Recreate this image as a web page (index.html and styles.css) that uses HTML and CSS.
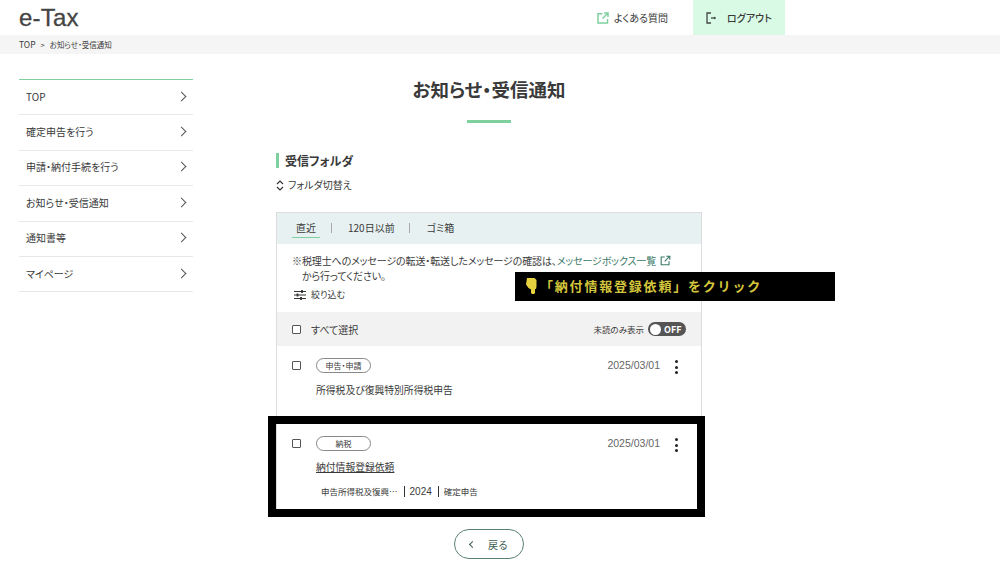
FILE: index.html
```html
<!DOCTYPE html>
<html lang="ja">
<head>
    <meta charset="UTF-8">
    <title>お知らせ・受信通知</title>
    <link rel="stylesheet" href="styles.css">
</head>
<body>
    <header class="header">
        <div class="logo">e-Tax</div>
        <a class="head-link faq">
            <svg width="12" height="12" viewBox="0 0 12 12" fill="none" stroke="#7fd0a0" stroke-width="1.5"><path d="M10.5 7v4H1V1.8h4.5"/><path d="M7 1h4v4M11 1L5.5 6.5"/></svg>
            よくある質問
        </a>
        <a class="head-link logout">
            <svg width="11" height="12" viewBox="0 0 11 12" fill="none" stroke="#444" stroke-width="1.3"><path d="M5 1H1v10h4"/><path d="M5 6h4.5"/><path d="M8 4.5L10 6 8 7.5z" fill="#444" stroke="none"/></svg>
            ログアウト
        </a>
    </header>
    <div class="breadcrumb"><span class="crumb-top">TOP</span><span>&gt;</span><span>お知らせ・受信通知</span></div>

    <div class="layout">
        <nav class="side">
            <a class="side-item">TOP<span class="chev"></span></a>
            <a class="side-item">確定申告を行う<span class="chev"></span></a>
            <a class="side-item">申請・納付手続を行う<span class="chev"></span></a>
            <a class="side-item">お知らせ・受信通知<span class="chev"></span></a>
            <a class="side-item">通知書等<span class="chev"></span></a>
            <a class="side-item">マイページ<span class="chev"></span></a>
        </nav>

        <main class="main">
            <h1 class="title">お知らせ・受信通知</h1>
            <div class="title-bar"></div>
            <h2 class="folder">受信フォルダ</h2>
            <div class="switch">
                <svg width="8" height="11" viewBox="0 0 8 11" fill="none" stroke="#333" stroke-width="1.2"><path d="M1 4l3-3 3 3M1 7l3 3 3-3"/></svg>
                フォルダ切替え
            </div>

            <div class="panel">
                <div class="tabs">
                    <span class="tab active">直近</span>
                    <span class="tab">120日以前</span>
                    <span class="tab">ゴミ箱</span>
                </div>
                <div class="notice">
                    <p>※税理士へのメッセージの転送・転送したメッセージの確認は、<span class="msg-link">メッセージボックス一覧</span>
                        <svg width="11" height="11" viewBox="0 0 14 14" fill="none" stroke="#3b7a68" stroke-width="1.4"><path d="M11.5 8v4.5h-10v-10H6"/><path d="M8 1.5h4.5V6M12.5 1.5L6 8"/></svg>
                    </p>
                    <p class="indent">から行ってください。</p>
                    <div class="filter">
                        <svg width="12" height="10" viewBox="0 0 12 10" fill="none" stroke="#333" stroke-width="1"><path d="M0 1.5h12M0 5h12M0 8.5h12"/><path d="M8 0v3M3.5 3.5v3M7 7v3" stroke-width="1.8"/></svg>
                        絞り込む
                    </div>
                </div>
                <div class="select-all">
                    <span class="check"></span>
                    <span>すべて選択</span>
                    <span class="unread">未読のみ表示</span>
                    <span class="toggle"><i></i>OFF</span>
                </div>
                <div class="msg">
                    <span class="check"></span>
                    <div class="msg-body">
                        <span class="pill">申告・申請</span>
                        <div class="msg-title">所得税及び復興特別所得税申告</div>
                    </div>
                    <span class="date">2025/03/01</span>
                    <span class="dots"><i></i><i></i><i></i></span>
                </div>
                <div class="msg second">
                    <span class="check"></span>
                    <div class="msg-body">
                        <span class="pill">納税</span>
                        <div class="msg-title link">納付情報登録依頼</div>
                        <div class="meta"><span>申告所得税及復興…</span><span class="year">2024</span><span>確定申告</span></div>
                    </div>
                    <span class="date">2025/03/01</span>
                    <span class="dots"><i></i><i></i><i></i></span>
                </div>
                <div class="frame"></div>
            </div>

            <button class="back"><span class="back-chev"></span>戻る</button>

            <div class="callout">
                <svg width="11" height="16" viewBox="0 0 11 16" fill="#e6d23e"><path d="M1 0h7.5l2 2v6.5L10 11H9v4l-1 1H6l-1-1v-3.5L2.5 10 0 6.5z"/></svg>
                <span class="callout-text">「納付情報登録依頼」をクリック</span>
            </div>
        </main>
    </div>
</body>
</html>
```

FILE: styles.css
```css
* {
    box-sizing: border-box;
}
body {
    margin: 0;
    height: 584px;
    overflow: hidden;
    background-color: white;
    color: #3a3a3a;
    font-family: "Noto Sans CJK JP", "Noto Sans", sans-serif;
    font-feature-settings: "palt";
    font-size: 10px;
}
p {
    margin: 0;
}
.header {
    display: flex;
    align-items: center;
    height: 35px;
    padding-left: 19px;
}
.logo {
    flex: 1;
    font-family: "Liberation Sans", sans-serif;
    font-size: 24px;
    letter-spacing: 0.2px;
    color: #444;
    -webkit-text-stroke: 0.3px #444;
}
.head-link {
    display: flex;
    align-items: center;
    height: 35px;
    font-size: 10px;
}
.faq {
    gap: 5px;
    margin-right: 25px;
}
.logout {
    gap: 10px;
    width: 92px;
    margin-right: 215px;
    padding-left: 13px;
    background-color: #d9fbe6;
    font-weight: 500;
}
.breadcrumb {
    display: flex;
    gap: 5px;
    height: 19px;
    padding-left: 19px;
    background-color: #f5f5f5;
    font-size: 7.5px;
    line-height: 19px;
}
.crumb-top {
    font-size: 8.5px;
}
.layout {
    display: flex;
    padding-left: 19px;
}
.side {
    width: 174px;
    margin-top: 25px;
    border-top: 1px solid #7ed09f;
    align-self: flex-start;
}
.side-item {
    display: flex;
    align-items: center;
    justify-content: space-between;
    height: 35.4px;
    padding: 0 7px 2px;
    border-bottom: 1.5px solid #e8e8e8;
    font-size: 10px;
}
.chev {
    width: 7px;
    height: 7px;
    margin-right: 1px;
    border-top: 1.3px solid #555;
    border-right: 1.3px solid #555;
    transform: rotate(45deg);
}
.main {
    position: relative;
    width: 426px;
    margin-left: 83px;
}
.title {
    margin: 21px 0 0;
    font-size: 18.5px;
    font-weight: 700;
    line-height: 28px;
    text-align: center;
}
.title-bar {
    width: 44px;
    height: 3px;
    margin: 17px auto 0;
    background-color: #7ed09f;
}
.folder {
    margin: 30px 0 0;
    padding-left: 6px;
    border-left: 3px solid #7ed09f;
    font-size: 12px;
    font-weight: 700;
    line-height: 15px;
}
.switch {
    display: flex;
    align-items: center;
    gap: 4px;
    margin-top: 10px;
    font-size: 10px;
    line-height: 14px;
}
.panel {
    position: relative;
    margin-top: 20px;
    border: 1px solid #ddd;
    border-bottom: none;
}
.tabs {
    display: flex;
    align-items: center;
    height: 31px;
    padding: 0 0 1px 15px;
    background-color: #e7f1f1;
}
.tab {
    padding: 0 14px 0 16px;
    border-left: 1px solid #aaa;
    line-height: 10px;
}
.tab.active {
    margin-right: 11px;
    padding: 4px 4px 4px;
    border-left: none;
    border-bottom: 1px solid #7ed09f;
}
.tab:last-child {
    padding-left: 17px;
}
.notice {
    height: 68px;
    padding: 9px 15px 0;
    line-height: 15px;
}
.notice p {
    white-space: nowrap;
    letter-spacing: -0.12px;
}
.notice svg {
    vertical-align: -1px;
    margin-left: 2px;
}
.msg-link {
    color: #3b7a68;
}
.indent {
    padding-left: 10px;
}
.filter {
    display: flex;
    align-items: center;
    gap: 5px;
    margin-top: 5px;
    font-size: 9px;
    line-height: 14px;
}
.select-all {
    display: flex;
    align-items: center;
    height: 34px;
    padding: 0 15px;
    background-color: #f2f2f2;
}
.select-all .check {
    margin-right: 10px;
}
.unread {
    margin-left: auto;
    margin-right: 4px;
    font-size: 8.5px;
}
.toggle {
    display: flex;
    align-items: center;
    gap: 3px;
    width: 38px;
    height: 14px;
    padding-left: 2px;
    border-radius: 7px;
    background-color: #555;
    color: white;
    font-size: 9px;
    font-weight: 700;
}
.toggle i {
    width: 11px;
    height: 11px;
    border-radius: 50%;
    background-color: white;
}
.check {
    flex: none;
    width: 9px;
    height: 9px;
    border: 1px solid #555;
    border-radius: 1px;
    background-color: white;
}
.msg {
    display: flex;
    align-items: flex-start;
    height: 78px;
    padding: 12px 23px 0 15px;
}
.msg > .check {
    margin-top: 3px;
}
.second {
    height: 85px;
}
.msg-body {
    flex: 1;
    margin-left: 15px;
}
.msg-title {
    margin-top: 9px;
    font-size: 9.8px;
    line-height: 16px;
}
.msg-title.link {
    margin-top: 8px;
    text-decoration: underline;
}
.pill {
    display: block;
    width: 55px;
    height: 15px;
    border: 1px solid #888;
    border-radius: 8px;
    font-size: 8px;
    line-height: 13px;
    text-align: center;
}
.date {
    margin-top: 1px;
    font-family: "Liberation Sans", sans-serif;
    font-size: 10.5px;
    line-height: 13px;
    color: #666;
}
.dots {
    display: flex;
    flex-direction: column;
    gap: 2.5px;
    margin-top: 2px;
    margin-left: 15px;
}
.dots i {
    width: 3px;
    height: 3px;
    border-radius: 50%;
    background-color: #222;
}
.meta {
    display: flex;
    margin-top: 11px;
    padding-left: 5px;
    font-size: 8.5px;
    line-height: 11px;
}
.meta span + span {
    margin-left: 5px;
    padding-left: 5px;
    border-left: 1px solid #333;
}
.year {
    padding-right: 1px;
    font-family: "Liberation Sans", sans-serif;
    font-size: 10px;
}
.meta .year {
    margin-left: 6px;
}
.frame {
    position: absolute;
    left: -9px;
    right: -4px;
    bottom: -8px;
    height: 101px;
    border: 8px solid black;
}
.back {
    display: flex;
    align-items: center;
    justify-content: center;
    gap: 13px;
    width: 70px;
    height: 30px;
    margin: 20px auto 0;
    border: 1px solid #5b8078;
    border-radius: 15px;
    background-color: white;
    color: #3c5a52;
    font-family: inherit;
    font-size: 10px;
}
.back-chev {
    width: 5px;
    height: 5px;
    border-left: 1px solid #3c5a52;
    border-bottom: 1px solid #3c5a52;
    transform: rotate(45deg);
}
.callout {
    position: absolute;
    left: 239px;
    top: 218px;
    display: flex;
    align-items: center;
    gap: 3px;
    width: 320px;
    height: 29px;
    padding-left: 11px;
    background-color: black;
    color: #d4c63c;
    font-feature-settings: normal;
    font-size: 13px;
    font-weight: 700;
    letter-spacing: 1.8px;
    white-space: nowrap;
}
.callout svg {
    margin-bottom: 1px;
}
.callout-text {
    margin-top: -3px;
}
```
